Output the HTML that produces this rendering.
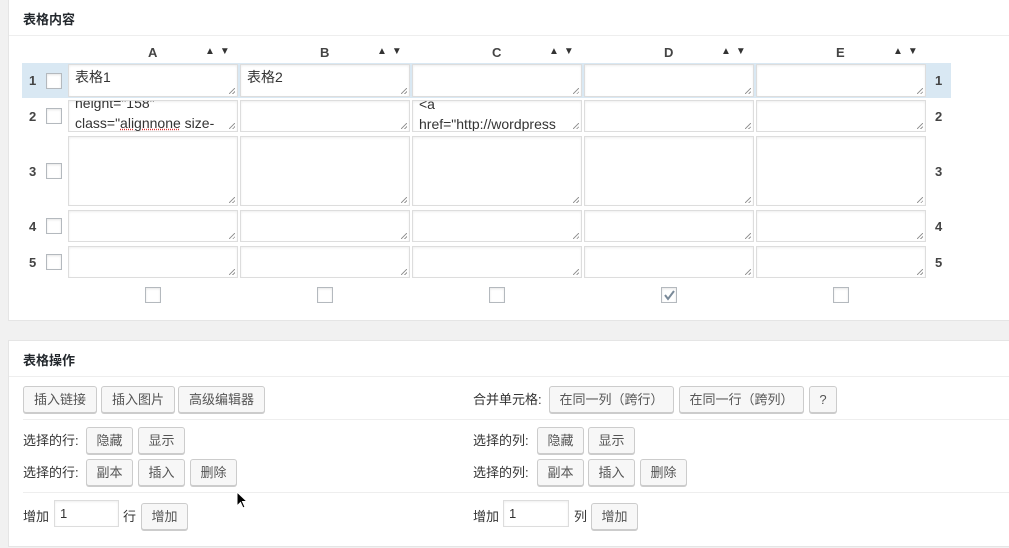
<!DOCTYPE html>
<html><head><meta charset="utf-8"><style>
*{box-sizing:border-box;margin:0;padding:0}
body{width:1009px;height:548px;background:#f1f1f1;position:relative;overflow:hidden;font-family:"Liberation Sans","Noto Sans CJK SC",sans-serif;font-size:13px;color:#444}
.a{position:absolute}
.panel{position:absolute;background:#fff;border:1px solid #e5e5e5;border-right:none}
.h{font-weight:bold;font-size:13px;color:#23282d}
.line{position:absolute;height:1px;background:#eee}
.ta{position:absolute;width:170px;border:1px solid #ddd;background:#fff;box-shadow:inset 0 1px 2px rgba(0,0,0,.07);font-size:14px;color:#333;padding:2px 6px;line-height:20px;overflow:hidden}
.ta:after{content:"";position:absolute;right:2px;bottom:2px;width:6px;height:6px;background:linear-gradient(135deg,transparent 45%,#999 45%,#999 55%,transparent 55%,transparent 75%,#999 75%,#999 85%,transparent 85%)}
.cb{position:absolute;width:16px;height:16px;border:1px solid #b4b9be;background:#fff;box-shadow:inset 0 1px 2px rgba(0,0,0,.1)}
.num{position:absolute;font-weight:bold;font-size:13px;color:#444}
.col{position:absolute;font-weight:bold;font-size:13px;color:#444;top:45px}
.arr{position:absolute;font-size:10px;color:#333;top:46px;letter-spacing:5px}
.btn{position:absolute;height:27px;border:1px solid #ccc;border-radius:3px;background:#f7f7f7;box-shadow:0 1px 0 #ccc;font-size:13px;color:#555;text-align:center;line-height:25px}
.lbl{position:absolute;font-size:13px;color:#333}
.inp{position:absolute;height:27px;border:1px solid #ddd;background:#fff;box-shadow:inset 0 1px 2px rgba(0,0,0,.07);padding-left:5px;line-height:25px;color:#333}
</style></head><body>
<div class="panel" style="left:8px;top:-1px;width:1010px;height:322px"></div>
<div class="a h" style="left:23px;top:9px">表格内容</div>
<div class="line" style="left:9px;top:35px;width:1000px"></div>

<div class="col" style="left:148px">A</div><div class="arr" style="left:205px">▲▼</div>
<div class="col" style="left:320px">B</div><div class="arr" style="left:377px">▲▼</div>
<div class="col" style="left:492px">C</div><div class="arr" style="left:549px">▲▼</div>
<div class="col" style="left:664px">D</div><div class="arr" style="left:721px">▲▼</div>
<div class="col" style="left:836px">E</div><div class="arr" style="left:893px">▲▼</div>

<div class="a" style="left:22px;top:63px;width:929px;height:35px;background:#d9e8f3"></div>

<div class="num" style="left:29px;top:73px">1</div><div class="cb" style="left:46px;top:73px"></div>
<div class="num" style="left:29px;top:109px">2</div><div class="cb" style="left:46px;top:108px"></div>
<div class="num" style="left:29px;top:164px">3</div><div class="cb" style="left:46px;top:163px"></div>
<div class="num" style="left:29px;top:219px">4</div><div class="cb" style="left:46px;top:218px"></div>
<div class="num" style="left:29px;top:255px">5</div><div class="cb" style="left:46px;top:254px"></div>
<div class="num" style="left:935px;top:73px">1</div>
<div class="num" style="left:935px;top:109px">2</div>
<div class="num" style="left:935px;top:164px">3</div>
<div class="num" style="left:935px;top:219px">4</div>
<div class="num" style="left:935px;top:255px">5</div>

<div class="ta" style="left:68px;top:64px;height:33px">表格1</div>
<div class="ta" style="left:240px;top:64px;height:33px">表格2</div>
<div class="ta" style="left:412px;top:64px;height:33px"></div>
<div class="ta" style="left:584px;top:64px;height:33px"></div>
<div class="ta" style="left:756px;top:64px;height:33px"></div>

<div class="ta" style="left:68px;top:100px;height:32px;padding-top:0"><div style="margin-top:-8px">height="158"<br>class="<span style="text-decoration:underline dotted #d33">alignnone</span> size-</div></div>
<div class="ta" style="left:240px;top:100px;height:32px"></div>
<div class="ta" style="left:412px;top:100px;height:32px;padding-top:0"><div style="margin-top:-7px">&lt;a<br>href="http://wordpress</div></div>
<div class="ta" style="left:584px;top:100px;height:32px"></div>
<div class="ta" style="left:756px;top:100px;height:32px"></div>

<div class="ta" style="left:68px;top:136px;height:70px"></div>
<div class="ta" style="left:240px;top:136px;height:70px"></div>
<div class="ta" style="left:412px;top:136px;height:70px"></div>
<div class="ta" style="left:584px;top:136px;height:70px"></div>
<div class="ta" style="left:756px;top:136px;height:70px"></div>

<div class="ta" style="left:68px;top:210px;height:32px"></div>
<div class="ta" style="left:240px;top:210px;height:32px"></div>
<div class="ta" style="left:412px;top:210px;height:32px"></div>
<div class="ta" style="left:584px;top:210px;height:32px"></div>
<div class="ta" style="left:756px;top:210px;height:32px"></div>

<div class="ta" style="left:68px;top:246px;height:32px"></div>
<div class="ta" style="left:240px;top:246px;height:32px"></div>
<div class="ta" style="left:412px;top:246px;height:32px"></div>
<div class="ta" style="left:584px;top:246px;height:32px"></div>
<div class="ta" style="left:756px;top:246px;height:32px"></div>

<div class="cb" style="left:145px;top:287px"></div>
<div class="cb" style="left:317px;top:287px"></div>
<div class="cb" style="left:489px;top:287px"></div>
<div class="cb" style="left:661px;top:287px"><svg width="14" height="14" style="position:absolute;left:0;top:0"><path d="M3 7 L6 11 L12 3" stroke="#7a8a99" stroke-width="2" fill="none"/></svg></div>
<div class="cb" style="left:833px;top:287px"></div>

<div class="panel" style="left:8px;top:340px;width:1010px;height:207px"></div>
<div class="a h" style="left:23px;top:350px">表格操作</div>
<div class="line" style="left:9px;top:376px;width:1000px"></div>

<div class="btn" style="left:23px;top:386px;width:74px">插入链接</div>
<div class="btn" style="left:101px;top:386px;width:74px">插入图片</div>
<div class="btn" style="left:178px;top:386px;width:87px">高级编辑器</div>
<div class="lbl" style="left:473px;top:389px">合并单元格:</div>
<div class="btn" style="left:549px;top:386px;width:125px">在同一列（跨行）</div>
<div class="btn" style="left:679px;top:386px;width:125px">在同一行（跨列）</div>
<div class="btn" style="left:809px;top:386px;width:28px">?</div>

<div class="line" style="left:23px;top:419px;width:986px"></div>

<div class="lbl" style="left:23px;top:430px">选择的行:</div>
<div class="btn" style="left:86px;top:427px;width:47px">隐藏</div>
<div class="btn" style="left:138px;top:427px;width:47px">显示</div>
<div class="lbl" style="left:23px;top:462px">选择的行:</div>
<div class="btn" style="left:86px;top:459px;width:47px">副本</div>
<div class="btn" style="left:138px;top:459px;width:47px">插入</div>
<div class="btn" style="left:190px;top:459px;width:47px">删除</div>

<div class="lbl" style="left:473px;top:430px">选择的列:</div>
<div class="btn" style="left:537px;top:427px;width:47px">隐藏</div>
<div class="btn" style="left:588px;top:427px;width:47px">显示</div>
<div class="lbl" style="left:473px;top:462px">选择的列:</div>
<div class="btn" style="left:537px;top:459px;width:47px">副本</div>
<div class="btn" style="left:588px;top:459px;width:47px">插入</div>
<div class="btn" style="left:640px;top:459px;width:47px">删除</div>

<div class="line" style="left:23px;top:492px;width:986px"></div>

<div class="lbl" style="left:23px;top:506px">增加</div>
<div class="inp" style="left:54px;top:500px;width:65px">1</div>
<div class="lbl" style="left:123px;top:506px">行</div>
<div class="btn" style="left:141px;top:503px;width:47px">增加</div>
<div class="lbl" style="left:473px;top:506px">增加</div>
<div class="inp" style="left:503px;top:500px;width:66px">1</div>
<div class="lbl" style="left:574px;top:506px">列</div>
<div class="btn" style="left:591px;top:503px;width:47px">增加</div>

<svg class="a" style="left:236px;top:491px" width="12" height="19"><path d="M1 1 L1 15 L4.5 11.5 L7 17 L9 16 L6.5 10.5 L11 10.5 Z" fill="#000" stroke="#fff" stroke-width="1"/></svg>
</body></html>
